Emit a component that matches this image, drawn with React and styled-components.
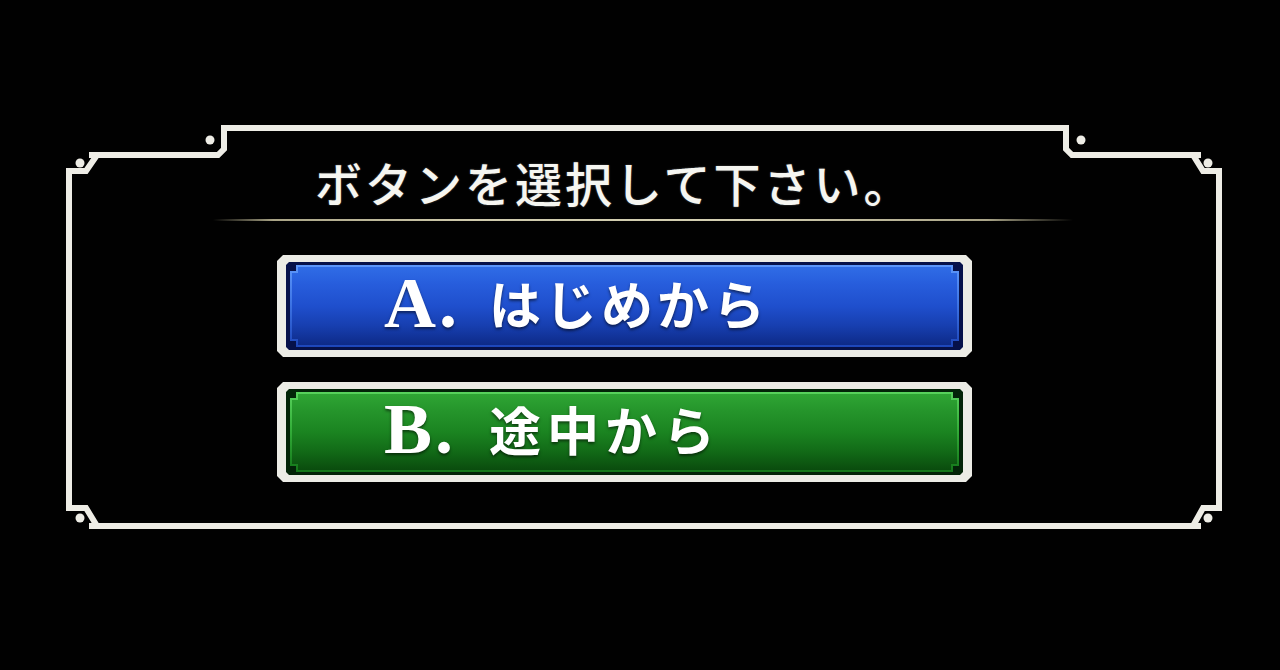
import React from "react";
import styled, { createGlobalStyle } from "styled-components";

const GlobalStyle = createGlobalStyle`
  *, *::before, *::after { box-sizing: border-box; }
  html, body {
    margin: 0;
    padding: 0;
    background: #000;
  }
  body {
    font-family: "Noto Sans CJK JP", "Noto Sans", sans-serif;
  }
`;

const chamfer = (n) => `polygon(
  ${n}px 0, calc(100% - ${n}px) 0, 100% ${n}px, 100% calc(100% - ${n}px),
  calc(100% - ${n}px) 100%, ${n}px 100%, 0 calc(100% - ${n}px), 0 ${n}px
)`;

const notch = (n) => `polygon(
  ${n}px 0, calc(100% - ${n}px) 0, calc(100% - ${n}px) ${n}px, 100% ${n}px,
  100% calc(100% - ${n}px), calc(100% - ${n}px) calc(100% - ${n}px),
  calc(100% - ${n}px) 100%, ${n}px 100%, ${n}px calc(100% - ${n}px),
  0 calc(100% - ${n}px), 0 ${n}px, ${n}px ${n}px
)`;

const palettes = {
  blue: {
    edge: "#06114a",
    rim: "linear-gradient(180deg, #5d97fa 0%, #3f76e6 45%, #1d46bb 100%)",
    face:
      "linear-gradient(180deg, #2f6ce6 0%, #275ddc 22%, #1f4fcd 50%, #173fb0 75%, #0d2a88 100%)",
  },
  green: {
    edge: "#032408",
    rim: "linear-gradient(180deg, #58d25c 0%, #35b03b 45%, #137619 100%)",
    face:
      "linear-gradient(180deg, #2fa534 0%, #25952b 22%, #1b8421 50%, #126b17 75%, #0a4c0e 100%)",
  },
};

const Stage = styled.main`
  width: 1280px;
  height: 670px;
  background: #010101;
  padding: 120px 0 0 60px;
  overflow: hidden;
`;

const Panel = styled.section`
  position: relative;
  width: 1170px;
  height: 420px;
  display: flex;
  flex-direction: column;
  padding-top: 40px;
`;

const FrameArt = styled.svg`
  position: absolute;
  inset: 0;
  width: 100%;
  height: 100%;
  pointer-events: none;
`;

const Title = styled.h1`
  position: relative;
  margin: 0 0 0 255px;
  font-size: 47px;
  line-height: 44px;
  letter-spacing: 3px;
  font-weight: 500;
  color: #f6f6f1;
  text-shadow: 0 0 2px rgba(255, 255, 255, 0.35);
  white-space: nowrap;
`;

const Divider = styled.div`
  margin: 15px 0 0 153px;
  width: 860px;
  height: 2px;
  background: linear-gradient(
    90deg,
    rgba(190, 184, 150, 0) 0%,
    #a9a486 7%,
    #cfcaac 30%,
    #d4cfb2 60%,
    #aaa588 90%,
    rgba(190, 184, 150, 0) 100%
  );
`;

const Choices = styled.div`
  position: relative;
  display: flex;
  flex-direction: column;
  gap: 25px;
  margin: 34px 0 0 217px;
  width: 695px;
`;

const ChoiceButton = styled.button`
  display: block;
  width: 100%;
  height: ${(p) => p.$height}px;
  border: 0;
  margin: 0;
  padding: 7px 9px;
  background: #ecece6;
  clip-path: ${chamfer(6)};
  cursor: pointer;
  font: inherit;
`;

const Edge = styled.div`
  height: 100%;
  padding: 3px 4px;
  background: ${(p) => palettes[p.$tone].edge};
  clip-path: ${chamfer(3)};
`;

const Rim = styled.div`
  height: 100%;
  padding: 2px;
  background: ${(p) => palettes[p.$tone].rim};
  clip-path: ${notch(6)};
`;

const Face = styled.div`
  height: 100%;
  display: flex;
  align-items: center;
  padding: 0 0 6px 92px;
  background: ${(p) => palettes[p.$tone].face};
  clip-path: ${notch(6)};
  color: #fff;
  text-shadow: 0 2px 3px rgba(0, 0, 0, 0.55);
`;

const Letter = styled.span`
  width: 105px;
  flex: none;
  font-family: "Liberation Serif", "Times New Roman", serif;
  font-weight: 700;
  font-size: 72px;
  line-height: 1;
  letter-spacing: 3px;
  text-align: left;
`;

const Caption = styled.span`
  font-family: "Noto Sans CJK JP", sans-serif;
  font-weight: 700;
  font-size: 52px;
  line-height: 1;
  letter-spacing: ${(p) => p.$spacing}px;
  white-space: nowrap;
`;

const choices = [
  { letter: "A.", text: "はじめから", tone: "blue", height: 102, spacing: 4 },
  { letter: "B.", text: "途中から", tone: "green", height: 100, spacing: 6 },
];

// Pixel-style ornamental border: raised centre tab, notched corners and studs
const FRAME_PATH =
  "M 37 35 L 158 35 L 164 29 L 164 8 L 1006 8 L 1006 29 L 1012 35 L 1133 35 " +
  "L 1143 51 L 1159 51 L 1159 388 L 1143 388 L 1133 406 L 37 406 L 26 388 " +
  "L 9 388 L 9 51 L 26 51 Z";

const studs = [
  [20, 43],
  [150, 20],
  [1021, 20],
  [1148, 43],
  [20, 398],
  [1148, 398],
];

function Frame() {
  return (
    <FrameArt viewBox="0 0 1170 420" aria-hidden="true">
      <g stroke="#eeede6" strokeWidth="6" fill="none" strokeLinejoin="miter">
        <path d={FRAME_PATH} />
        <path d="M 29 35 L 38 35 M 1132 35 L 1141 35 M 29 406 L 38 406 M 1132 406 L 1141 406" />
      </g>
      <g fill="#eeede6">
        {studs.map(([x, y]) => (
          <circle key={`${x}-${y}`} cx={x} cy={y} r="4.5" />
        ))}
      </g>
    </FrameArt>
  );
}

export default function App() {
  return (
    <>
      <GlobalStyle />
      <Stage>
        <Panel>
          <Frame />
          <Title>ボタンを選択して下さい。</Title>
          <Divider />
          <Choices>
            {choices.map((c) => (
              <ChoiceButton key={c.letter} $height={c.height}>
                <Edge $tone={c.tone}>
                  <Rim $tone={c.tone}>
                    <Face $tone={c.tone}>
                      <Letter>{c.letter}</Letter>
                      <Caption $spacing={c.spacing}>{c.text}</Caption>
                    </Face>
                  </Rim>
                </Edge>
              </ChoiceButton>
            ))}
          </Choices>
        </Panel>
      </Stage>
    </>
  );
}
